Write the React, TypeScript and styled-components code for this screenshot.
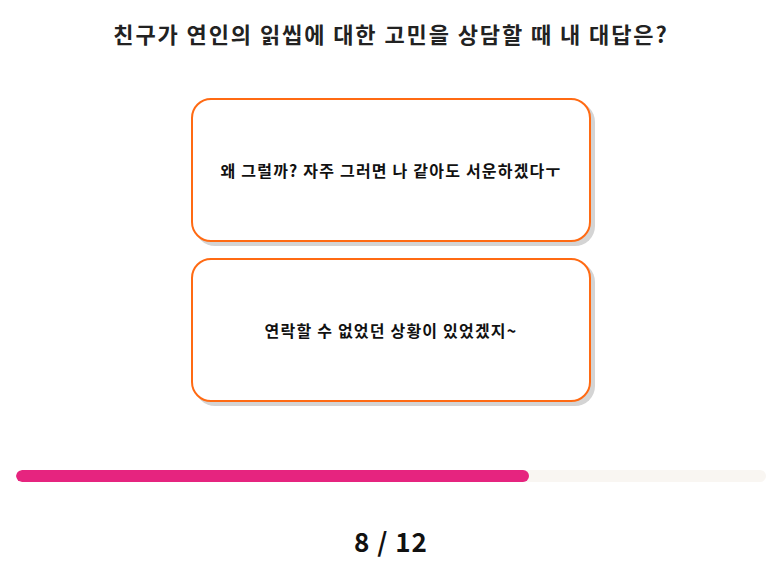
import React from 'react';
import styled, { createGlobalStyle } from 'styled-components';

const GlobalStyle = createGlobalStyle`
    body {
        margin: 0;
        background: #ffffff;
        font-family: "Noto Sans CJK KR", "Noto Sans", sans-serif;
        color: #222;
    }
`;

const options = [
    '왜 그럴까? 자주 그러면 나 같아도 서운하겠다ㅜ',
    '연락할 수 없었던 상황이 있었겠지~',
];

const current = 8;
const total = 12;

const App = () => {
    return (
        <>
            <GlobalStyle />
            <Page>
                <Question>친구가 연인의 읽씹에 대한 고민을 상담할 때 내 대답은?</Question>
                <OptionList>
                    {options.map((text) => (
                        <OptionButton key={text}>{text}</OptionButton>
                    ))}
                </OptionList>
                <ProgressTrack>
                    <ProgressFill style={{ width: `${(current / total) * 100 + 1.7}%` }} />
                </ProgressTrack>
                <Counter>{current} / {total}</Counter>
            </Page>
        </>
    );
};

const Page = styled.div`
    display: flex;
    flex-direction: column;
    align-items: center;
    padding: 18px 14px 0 16px;
`;

const Question = styled.h1`
    margin: 0;
    font-size: 22px;
    font-weight: bold;
    line-height: 30px;
    letter-spacing: 1.9px;
    color: #222;
`;

const OptionList = styled.div`
    display: flex;
    flex-direction: column;
    gap: 16px;
    margin-top: 50px;
`;

const OptionButton = styled.button`
    width: 400px;
    height: 144px;
    background: #fff;
    border: 2px solid #ff6a13;
    border-radius: 20px;
    box-shadow: 4px 4px 0 #d4d4d4;
    font-family: "Noto Sans CJK KR", "Noto Sans", sans-serif;
    font-size: 16px;
    font-weight: bold;
    letter-spacing: 1.2px;
    color: #111;
    cursor: pointer;
`;

const ProgressTrack = styled.div`
    align-self: stretch;
    height: 12px;
    margin-top: 68px;
    background: #f9f6f2;
    border-radius: 6px;
    overflow: hidden;
`;

const ProgressFill = styled.div`
    height: 100%;
    background: #e6247f;
    border-radius: 6px;
`;

const Counter = styled.div`
    margin-top: 40px;
    font-size: 26px;
    font-weight: bold;
    letter-spacing: 1px;
    color: #111;
`;

export default App;
